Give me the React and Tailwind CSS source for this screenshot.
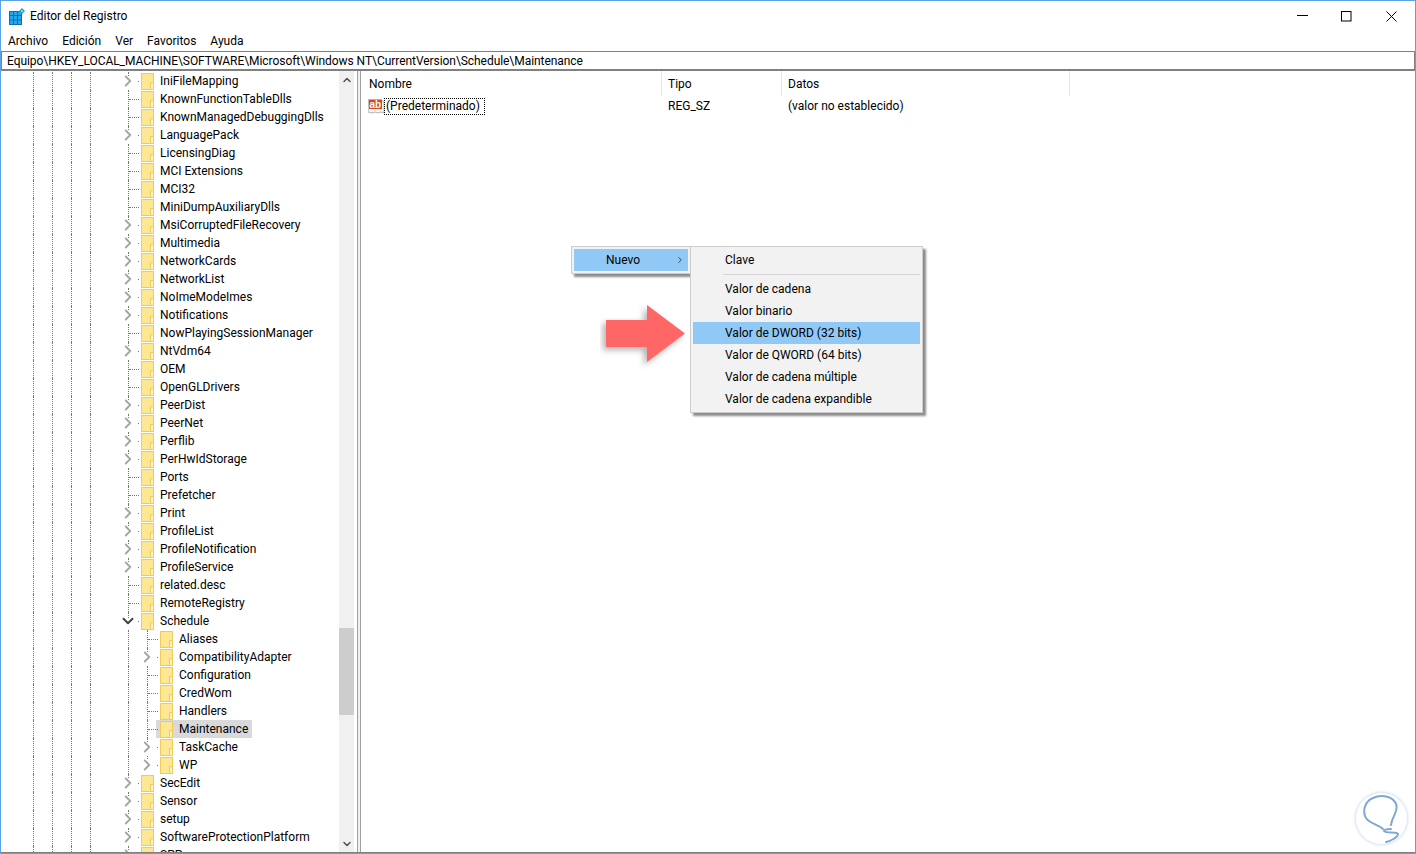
import React from 'react';
import { ChevronRight, ChevronDown, ChevronUp } from 'lucide-react';

// name, level, toggle: '>' collapsed, 'v' expanded, '' leaf
const TREE = [
  ['IniFileMapping', 1, '>'],
  ['KnownFunctionTableDlls', 1, ''],
  ['KnownManagedDebuggingDlls', 1, ''],
  ['LanguagePack', 1, '>'],
  ['LicensingDiag', 1, ''],
  ['MCI Extensions', 1, ''],
  ['MCI32', 1, ''],
  ['MiniDumpAuxiliaryDlls', 1, ''],
  ['MsiCorruptedFileRecovery', 1, '>'],
  ['Multimedia', 1, '>'],
  ['NetworkCards', 1, '>'],
  ['NetworkList', 1, '>'],
  ['NoImeModeImes', 1, '>'],
  ['Notifications', 1, '>'],
  ['NowPlayingSessionManager', 1, ''],
  ['NtVdm64', 1, '>'],
  ['OEM', 1, ''],
  ['OpenGLDrivers', 1, ''],
  ['PeerDist', 1, '>'],
  ['PeerNet', 1, '>'],
  ['Perflib', 1, '>'],
  ['PerHwIdStorage', 1, '>'],
  ['Ports', 1, ''],
  ['Prefetcher', 1, ''],
  ['Print', 1, '>'],
  ['ProfileList', 1, '>'],
  ['ProfileNotification', 1, '>'],
  ['ProfileService', 1, '>'],
  ['related.desc', 1, ''],
  ['RemoteRegistry', 1, ''],
  ['Schedule', 1, 'v'],
  ['Aliases', 2, ''],
  ['CompatibilityAdapter', 2, '>'],
  ['Configuration', 2, ''],
  ['CredWom', 2, ''],
  ['Handlers', 2, ''],
  ['Maintenance', 2, '', true],
  ['TaskCache', 2, '>'],
  ['WP', 2, '>'],
  ['SecEdit', 1, '>'],
  ['Sensor', 1, '>'],
  ['setup', 1, '>'],
  ['SoftwareProtectionPlatform', 1, '>'],
  ['SPP', 1, '>'],
];

const MENU = ['Archivo', 'Edición', 'Ver', 'Favoritos', 'Ayuda'];
const SUBMENU = ['Valor de cadena', 'Valor binario', 'Valor de DWORD (32 bits)', 'Valor de QWORD (64 bits)', 'Valor de cadena múltiple', 'Valor de cadena expandible'];

function Folder() {
  return (
    <svg width="13" height="17" viewBox="0 0 13 17" className="shrink-0">
      <rect x="0.5" y="0.5" width="12" height="16" fill="#fde792" stroke="#eecb5f" />
      <path d="M12.5 9.5v7h-3v-7z" fill="#fff3c4" stroke="#eecb5f" />
    </svg>
  );
}

function Guide() {
  return <span className="w-[19px] h-full shrink-0 border-l border-dotted border-[#777]" />;
}

// toggle column: dotted trunk, dotted branch to the folder, chevron on top
function Branch({ toggle, half }) {
  return (
    <span className="relative h-full w-[13px] shrink-0">
      <span className={`absolute left-0 top-0 border-l border-dotted border-[#777] ${half ? 'h-[9px]' : 'h-full'}`} />
      <span className={`absolute top-[9px] right-[2px] border-t border-dotted border-[#777] ${toggle ? 'w-[4px]' : 'w-[10px]'}`} />
      {toggle === '>' && (
        <span className="absolute left-[-4px] top-[4px] bg-white">
          <ChevronRight size={18} strokeWidth={2.5} className="ml-[-5px] mt-[-4px] text-[#a6a6a6]" />
        </span>
      )}
      {toggle === 'v' && (
        <span className="absolute left-[-4px] top-[6px] bg-white">
          <ChevronDown size={18} strokeWidth={2.5} className="ml-[-5px] mt-[-6px] text-[#404040]" />
        </span>
      )}
    </span>
  );
}

function TreeRow({ name, level, toggle, selected }) {
  return (
    <div className="flex h-[18px] shrink-0 items-center">
      <span className="w-[32px] shrink-0" />
      <Guide />
      <Guide />
      <Guide />
      <Guide />
      <span className="w-[19px] shrink-0" />
      {level === 2 ? <Guide /> : <Branch toggle={toggle} />}
      {level === 2 && <Branch toggle={toggle} half={name === 'WP'} />}
      <span className={`ml-[-4px] flex h-full items-center pl-[4px] ${selected ? 'bg-[#d9d9d9]' : ''}`}>
        <Folder />
        <span className="ml-[6px] pr-[4px] whitespace-nowrap leading-[18px]">{name}</span>
      </span>
    </div>
  );
}

function RegIcon() {
  return (
    <svg width="17" height="17" viewBox="0 0 17 17" className="shrink-0">
      <path d="M0.5 1.5h13l2.5 2.5v11l-3-1-3 1-3-1-3 1-4-1z" fill="#f4f4f4" stroke="#b5b5b5" />
      <rect x="1" y="2" width="13" height="9" fill="#d9481c" />
      <text x="1.5" y="9.5" fontSize="10" fontWeight="700" fill="#fff" fontFamily="'Liberation Sans', sans-serif">ab</text>
    </svg>
  );
}

export default function App() {
  return (
    <div className="w-[1416px] h-[854px] bg-white overflow-hidden flex flex-col border border-[#5ba3e6] text-[12px] text-black font-['Roboto',sans-serif]">
      <div className="flex h-[30px] shrink-0 items-center">
        <svg width="16" height="17" viewBox="0 0 16 17" className="ml-[8px] shrink-0">
          <rect x="0.5" y="3.5" width="12" height="13" fill="#25a9ee" stroke="#0f6cbd" />
          <path d="M4.5 3v13M8.5 3v13M0 7.5h12M0 12h12" stroke="#0f6cbd" />
          <path d="M13 0l3 3-3 3-3-3z" fill="#2aa0e0" />
          <rect x="12.2" y="2.2" width="1.6" height="1.6" fill="#bfe6fa" />
        </svg>
        <span className="ml-[5px]">Editor del Registro</span>
        <div className="ml-auto flex items-center h-full">
          <svg width="12" height="12" viewBox="0 0 12 12" className="mr-[33px]"><path d="M1 5.5h11" stroke="#000" /></svg>
          <svg width="11" height="11" viewBox="0 0 11 11" className="mr-[34px]"><rect x="0.5" y="0.5" width="9.5" height="9.5" fill="none" stroke="#000" /></svg>
          <svg width="11" height="11" viewBox="0 0 11 11" className="mr-[18px]"><path d="M0.5 0.5l10 10M10.5 0.5l-10 10" stroke="#000" /></svg>
        </div>
      </div>

      <div className="flex h-[20px] shrink-0 items-center gap-[14px] pl-[7px]">
        {MENU.map((m) => <span key={m}>{m}</span>)}
      </div>

      <div className="flex h-[19px] shrink-0 items-center border border-[#808080] pl-[5px] whitespace-nowrap tracking-[-0.055px]">
        Equipo\HKEY_LOCAL_MACHINE\SOFTWARE\Microsoft\Windows NT\CurrentVersion\Schedule\Maintenance
      </div>

      <div className="flex min-h-0 flex-1 border-y border-[#808080]">
        <div className="flex w-[353px] shrink-0">
          <div className="flex min-w-0 flex-1 flex-col overflow-hidden pt-[1px]">
            {TREE.map(([name, level, toggle, selected]) => (
              <TreeRow key={name} name={name} level={level} toggle={toggle} selected={selected} />
            ))}
          </div>
          <div className="flex w-[15px] shrink-0 flex-col bg-[#f0f0f0]">
            <div className="flex h-[17px] shrink-0 items-center justify-center">
              <ChevronUp size={12} strokeWidth={3} className="text-[#505050]" />
            </div>
            <div className="flex-1 flex flex-col justify-end pb-[120px]">
              <div className="h-[87px] bg-[#cdcdcd]" />
            </div>
            <div className="flex h-[17px] shrink-0 items-center justify-center">
              <ChevronDown size={12} strokeWidth={3} className="text-[#505050]" />
            </div>
          </div>
        </div>
        <div className="w-[3px] shrink-0 bg-white" />
        <div className="w-[4px] shrink-0 bg-[#f0f0f0] border-x border-[#a0a0a0]" />

        <div className="relative flex-1 min-w-0">
          <div className="flex h-[26px] items-center pb-[1px]">
            <span className="w-[301px] h-full flex items-center pl-[8px] border-r border-[#e5e5e5]">Nombre</span>
            <span className="w-[120px] h-full flex items-center pl-[6px] border-r border-[#e5e5e5]">Tipo</span>
            <span className="w-[288px] h-full flex items-center pl-[6px] border-r border-[#e5e5e5]">Datos</span>
          </div>
          <div className="flex h-[18px] items-center">
            <div className="flex w-[301px] items-center pl-[7px]">
              <RegIcon />
              <span className="ml-[-1px] border border-dotted border-black pl-[1px] pr-[4px] leading-[15px]">(Predeterminado)</span>
            </div>
            <span className="w-[120px] pl-[6px]">REG_SZ</span>
            <span className="pl-[6px]">(valor no establecido)</span>
          </div>

          {/* context menus */}
          <div className="absolute left-[210px] top-[175px] flex items-start">
            <div className="w-[120px] h-[28px] bg-[#f2f2f2] border border-[#ccc] p-[2px] shadow-[3px_3px_2px_rgba(0,0,0,0.45)]">
              <div className="flex h-[22px] items-center justify-between bg-[#90c8f6] pl-[32px] pr-[1px]">
                <span>Nuevo</span>
                <ChevronRight size={10} className="mr-[2px] text-[#333]" />
              </div>
            </div>
            <div className="ml-[-1px] z-10 w-[233px] h-[167px] bg-[#f2f2f2] border border-[#ccc] p-[2px] shadow-[3px_3px_2px_rgba(0,0,0,0.45)] flex flex-col">
              <div className="flex h-[22px] items-center pl-[32px]">Clave</div>
              <div className="ml-[30px] my-[3px] border-t border-[#d7d7d7]" />
              {SUBMENU.map((s, i) => (
                <div key={s} className={`flex h-[22px] shrink-0 items-center pl-[32px] ${i === 2 ? 'bg-[#90c8f6]' : ''}`}>{s}</div>
              ))}
            </div>
          </div>

          {/* annotation arrow */}
          <svg width="96" height="70" viewBox="0 0 96 70" className="absolute left-[239px] top-[229px] z-20">
            <defs>
              <filter id="sh" x="-20%" y="-20%" width="140%" height="140%">
                <feDropShadow dx="-3" dy="3" stdDeviation="3" floodColor="#000" floodOpacity="0.3" />
              </filter>
            </defs>
            <path d="M6 20h41V5l38 28.5L47 62V47H6z" fill="#ff6666" filter="url(#sh)" />
          </svg>

          {/* watermark */}
          <div className="absolute right-[7px] bottom-[7px] h-[53px] w-[53px] rounded-full bg-white border border-[#e3e9f3] shadow-[0_0_3px_rgba(150,180,220,0.4)]">
            <svg width="52" height="52" viewBox="0 0 52 52" fill="none" stroke="#7ea6d6" strokeWidth="2" strokeLinecap="round">
              <path d="M27 36C22 31 14 31 10 25C6 18 9 8 17 5C25 1 37 3 40 11C43 18 36 23 35 32" />
              <path d="M35 36C30 36 28 37 28 38C30 41 41 38 42 41C42 44 35 48 30 49" />
            </svg>
          </div>
        </div>
      </div>
    </div>
  );
}
